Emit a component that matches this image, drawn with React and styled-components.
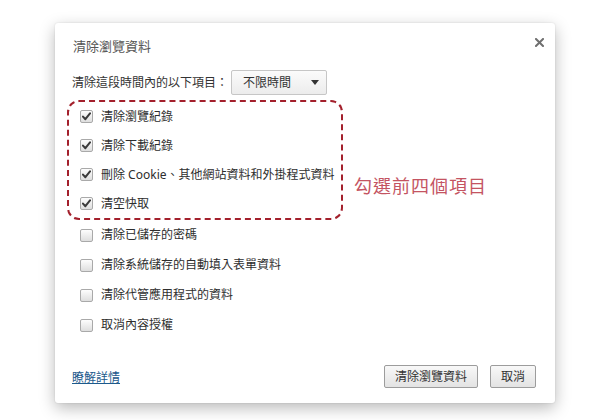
import styled, { createGlobalStyle } from 'styled-components';

const GlobalStyle = createGlobalStyle`
  html, body {
    margin: 0;
    background: #ffffff;
  }
  body {
    font-family: 'Noto Sans', 'Noto Sans CJK TC', sans-serif;
    color: #333333;
  }
`;

const options = [
  { label: '清除瀏覽紀錄', checked: true },
  { label: '清除下載紀錄', checked: true },
  { label: '刪除 Cookie、其他網站資料和外掛程式資料', checked: true },
  { label: '清空快取', checked: true },
  { label: '清除已儲存的密碼', checked: false },
  { label: '清除系統儲存的自動填入表單資料', checked: false },
  { label: '清除代管應用程式的資料', checked: false },
  { label: '取消內容授權', checked: false }
];

const CheckIcon = () => (
  <svg width="9" height="9" viewBox="0 0 9 9">
    <path d="M1 4.6 L3.4 7.2 L8 1.4" fill="none" stroke="#3a3a3a" strokeWidth="2" strokeLinecap="round" strokeLinejoin="round" />
  </svg>
);

const CloseIcon = () => (
  <svg width="9" height="9" viewBox="0 0 9 9">
    <path d="M1 1 L8 8 M8 1 L1 8" stroke="#6f6f6f" strokeWidth="2" strokeLinecap="square" />
  </svg>
);

const Option = ({ label, checked }) => (
  <Row>
    <Box>{checked && <CheckIcon />}</Box>
    <RowLabel>{label}</RowLabel>
  </Row>
);

const App = () => {
  const picked = options.filter(o => o.checked);
  const rest = options.filter(o => !o.checked);
  return (
    <Page>
      <GlobalStyle />
      <Dialog>
        <Header>
          <Title>清除瀏覽資料</Title>
          <Close type="button">
            <CloseIcon />
          </Close>
        </Header>
        <TimeRow>
          <span>清除這段時間內的以下項目：</span>
          <Select>
            不限時間
            <Arrow />
          </Select>
        </TimeRow>
        <Annotated>
          <Highlight>
            {picked.map(o => (
              <Option key={o.label} {...o} />
            ))}
          </Highlight>
          <Note>勾選前四個項目</Note>
        </Annotated>
        <List>
          {rest.map(o => (
            <Option key={o.label} {...o} />
          ))}
        </List>
        <Footer>
          <Link href="#">瞭解詳情</Link>
          <Buttons>
            <Button type="button">清除瀏覽資料</Button>
            <Button type="button">取消</Button>
          </Buttons>
        </Footer>
      </Dialog>
    </Page>
  );
};

export default App;

const Page = styled.div`
  width: 600px;
  height: 420px;
  box-sizing: border-box;
  padding: 23px 0 0 55px;
`;

const Dialog = styled.div`
  width: 500px;
  height: 380px;
  box-sizing: border-box;
  background: #ffffff;
  border-radius: 3px;
  box-shadow: 0 5px 16px rgba(0, 0, 0, 0.28), 0 0 2px rgba(0, 0, 0, 0.12);
  display: flex;
  flex-direction: column;
  font-size: 12px;
`;

const Header = styled.div`
  display: flex;
  justify-content: space-between;
  align-items: flex-start;
  padding: 13px 10px 0 18px;
`;

const Title = styled.h2`
  margin: 0;
  font-size: 13px;
  font-weight: 400;
  line-height: 20px;
  color: #555555;
`;

const Close = styled.button`
  border: none;
  background: none;
  padding: 0;
  margin-top: 1px;
  width: 11px;
  height: 11px;
  display: flex;
  align-items: center;
  justify-content: center;
  cursor: pointer;
`;

const TimeRow = styled.div`
  display: flex;
  align-items: center;
  gap: 3px;
  margin-top: 14px;
  padding-left: 17px;
  line-height: 25px;
  color: #333333;
`;

const Select = styled.div`
  width: 96px;
  height: 25px;
  box-sizing: border-box;
  border: 1px solid #c6c6c6;
  border-radius: 2px;
  background: linear-gradient(#fbfbfb, #ececec);
  display: flex;
  align-items: center;
  justify-content: space-between;
  padding: 0 7px 0 11px;
  line-height: 23px;
  color: #333333;
`;

const Arrow = styled.span`
  width: 0;
  height: 0;
  border-left: 4px solid transparent;
  border-right: 4px solid transparent;
  border-top: 5px solid #333333;
`;

const Annotated = styled.div`
  display: flex;
  align-items: flex-start;
  gap: 11px;
  margin-top: 5px;
  padding-left: 12px;
`;

const Highlight = styled.div`
  width: 276px;
  box-sizing: border-box;
  border: 2px dashed #a3202c;
  border-radius: 12px;
  padding: 0 0 0 11px;
`;

const Note = styled.div`
  margin-top: 74px;
  font-size: 18px;
  letter-spacing: 1px;
  line-height: 24px;
  color: #c45462;
`;

const List = styled.div`
  padding-left: 25px;
`;

const Row = styled.div`
  display: flex;
  align-items: center;
  gap: 8px;
  height: 29px;
  ${List} & {
    height: 30px;
  }
`;

const Box = styled.span`
  width: 13px;
  height: 13px;
  box-sizing: border-box;
  border: 1px solid #a9a9a9;
  border-radius: 2px;
  background: linear-gradient(#fdfdfd, #dedede);
  display: flex;
  align-items: center;
  justify-content: center;
`;

const RowLabel = styled.span`
  color: #2e2e2e;
  line-height: 16px;
`;

const Footer = styled.div`
  margin-top: auto;
  display: flex;
  justify-content: space-between;
  align-items: center;
  padding: 0 19px 15px 17px;
`;

const Link = styled.a`
  color: #1d5a8c;
  text-decoration: underline;
  font-size: 12px;
`;

const Buttons = styled.div`
  display: flex;
  gap: 12px;
`;

const Button = styled.button`
  height: 23px;
  padding: 0 10px;
  border: 1px solid #9c9c9c;
  border-radius: 2px;
  background: linear-gradient(#f8f8f8, #e3e3e3);
  font-family: 'Noto Sans', 'Noto Sans CJK TC', sans-serif;
  font-size: 12px;
  color: #333333;
  line-height: 21px;
  cursor: pointer;
`;
